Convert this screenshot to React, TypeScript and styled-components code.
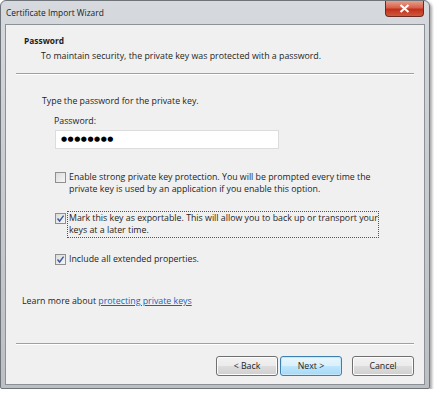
import styled, { createGlobalStyle } from "styled-components"

const GlobalStyle = createGlobalStyle`
    html, body {
        margin: 0;
        padding: 0;
        background: #ffffff;
    }
    body {
        font-family: "Open Sans", "Noto Sans", "DejaVu Sans", sans-serif;
        font-size: 8.8px;
        color: #1e1e1e;
    }
`;

const CheckMark = () => (
    <svg width="9" height="9" viewBox="0 0 9 9">
        <path d="M1.5 4.5 L3.6 7 L7.6 1.6" fill="none" stroke="#3a5a9a" strokeWidth="1.4" />
    </svg>
);

interface OptionProps {
    checked: boolean;
    focused?: boolean;
    lines: string[];
}

const Option = ({ checked, focused, lines }: OptionProps) => (
    <OptionRow>
        <Box>{checked && <CheckMark />}</Box>
        <OptionLabel $focused={focused}>
            {lines.map((line, index) => (
                <span key={index}>{line}</span>
            ))}
        </OptionLabel>
    </OptionRow>
);

export default function App() {
    return (
        <>
            <GlobalStyle />
            <Window>
                <TitleBar>
                    <Title>Certificate Import Wizard</Title>
                    <CloseButton>
                        <svg width="11" height="9" viewBox="0 0 11 9">
                            <path d="M1.5 1 L9.5 8 M9.5 1 L1.5 8" stroke="#ffffff" strokeWidth="2.2" />
                        </svg>
                    </CloseButton>
                </TitleBar>
                <Client>
                    <Header>
                        <HeaderTitle>Password</HeaderTitle>
                        <HeaderText>To maintain security, the private key was protected with a password.</HeaderText>
                    </Header>
                    <Separator />
                    <Body>
                        <Prompt>Type the password for the private key.</Prompt>
                        <FieldLabel>Password:</FieldLabel>
                        <PasswordBox>●●●●●●●●</PasswordBox>
                        <Options>
                            <Option
                                checked={false}
                                lines={[
                                    "Enable strong private key protection. You will be prompted every time the",
                                    "private key is used by an application if you enable this option.",
                                ]}
                            />
                            <Option
                                checked
                                focused
                                lines={[
                                    "Mark this key as exportable. This will allow you to back up or transport your",
                                    "keys at a later time.",
                                ]}
                            />
                            <Option checked lines={["Include all extended properties."]} />
                        </Options>
                        <LearnMore>
                            Learn more about <Link>protecting private keys</Link>
                        </LearnMore>
                    </Body>
                    <Separator />
                    <Footer>
                        <Button>&lt; Back</Button>
                        <Button $default>Next &gt;</Button>
                        <Button $gap>Cancel</Button>
                    </Footer>
                </Client>
            </Window>
        </>
    );
}

const Window = styled.div`
    width: 430px;
    height: 389px;
    box-sizing: border-box;
    display: flex;
    flex-direction: column;
    border: 1px solid #6f747a;
    border-radius: 6px 6px 2px 2px;
    background: linear-gradient(180deg, #d6dade 0%, #cacdd1 40%, #bcc0c4 100%);
    box-shadow: 2px 2px 3px rgba(0, 0, 0, 0.35);
`;

const TitleBar = styled.div`
    height: 23px;
    flex-shrink: 0;
    display: flex;
    align-items: flex-start;
    padding-left: 5px;
`;

const Title = styled.div`
    font-size: 8.4px;
    line-height: 23px;
    color: #1a1a1a;
`;

const CloseButton = styled.div`
    margin-left: auto;
    margin-right: 5px;
    width: 39px;
    height: 16px;
    box-sizing: border-box;
    display: flex;
    align-items: center;
    justify-content: center;
    border: 1px solid #6b2a22;
    border-top: none;
    border-radius: 0 0 4px 4px;
    background: linear-gradient(180deg, #e7a08d 0%, #d8614a 45%, #c1301d 55%, #cf5a3a 100%);
`;

const Client = styled.div`
    flex: 1;
    min-height: 0;
    margin: 0 4px 3px 4px;
    display: flex;
    flex-direction: column;
    background: #f0f0f0;
    border: 1px solid #8c9196;
`;

const Header = styled.div`
    flex-shrink: 0;
    padding: 9px 0 10px 18px;
    display: flex;
    flex-direction: column;
    gap: 3px;
`;

const HeaderTitle = styled.div`
    font-weight: bold;
    font-size: 8.4px;
    line-height: 13px;
`;

const HeaderText = styled.div`
    padding-left: 17px;
    line-height: 13px;
`;

const Separator = styled.div`
    flex-shrink: 0;
    margin: 0 10px;
    height: 1px;
    background: #a0a0a0;
    border-bottom: 1px solid #ffffff;
`;

const Body = styled.div`
    flex: 1;
    min-height: 0;
    padding: 20px 0 0 36px;
    display: flex;
    flex-direction: column;
`;

const Prompt = styled.div`
    line-height: 13px;
`;

const FieldLabel = styled.div`
    margin: 7px 0 2px 12px;
    line-height: 13px;
`;

const PasswordBox = styled.div`
    margin-left: 13px;
    width: 224px;
    height: 19px;
    box-sizing: border-box;
    padding-left: 5px;
    background: #ffffff;
    border: 1px solid #dcdcdc;
    font-family: "DejaVu Sans", sans-serif;
    font-size: 7px;
    letter-spacing: 0.5px;
    line-height: 17px;
    color: #000000;
`;

const Options = styled.div`
    margin: 22px 0 0 13px;
    display: flex;
    flex-direction: column;
    gap: 16px;
`;

const OptionRow = styled.div`
    display: flex;
    align-items: flex-start;
    gap: 2px;
`;

const Box = styled.div`
    margin-top: 1px;
    width: 11px;
    height: 11px;
    box-sizing: border-box;
    flex-shrink: 0;
    display: flex;
    align-items: center;
    justify-content: center;
    border: 1px solid #8f8f8f;
    background: linear-gradient(135deg, #dcdcdc 0%, #f6f6f6 100%);
`;

const OptionLabel = styled.div<{ $focused?: boolean }>`
    display: flex;
    flex-direction: column;
    line-height: 12px;
    padding: 0 0 1px 1px;
    outline: ${({ $focused }) => ($focused ? "1px dotted #555" : "none")};
    outline-offset: 0;
    width: ${({ $focused }) => ($focused ? "309px" : "auto")};
    white-space: nowrap;
`;

const LearnMore = styled.div`
    margin: 29px 0 0 -20px;
    line-height: 13px;
`;

const Link = styled.span`
    color: #1a63b8;
    text-decoration: underline;
`;

const Footer = styled.div`
    flex-shrink: 0;
    height: 39px;
    box-sizing: border-box;
    padding: 11px 10px 0 0;
    display: flex;
    justify-content: flex-end;
    align-items: flex-start;
`;

const Button = styled.div<{ $default?: boolean; $gap?: boolean }>`
    width: 62px;
    height: 20px;
    box-sizing: border-box;
    margin-left: ${({ $gap }) => ($gap ? "10px" : "2px")};
    display: flex;
    align-items: center;
    justify-content: center;
    border: 1px solid ${({ $default }) => ($default ? "#3c7fb1" : "#707070")};
    border-radius: 3px;
    background: ${({ $default }) =>
        $default
            ? "linear-gradient(180deg, #eaf6fd 0%, #d9f0fc 50%, #bee6fd 51%, #a7d9f5 100%)"
            : "linear-gradient(180deg, #f2f2f2 0%, #ebebeb 50%, #dddddd 51%, #cfcfcf 100%)"};
    box-shadow: inset 0 0 0 1px ${({ $default }) => ($default ? "#c6e7fa" : "#fcfcfc")};
    color: #1e1e1e;
`;
